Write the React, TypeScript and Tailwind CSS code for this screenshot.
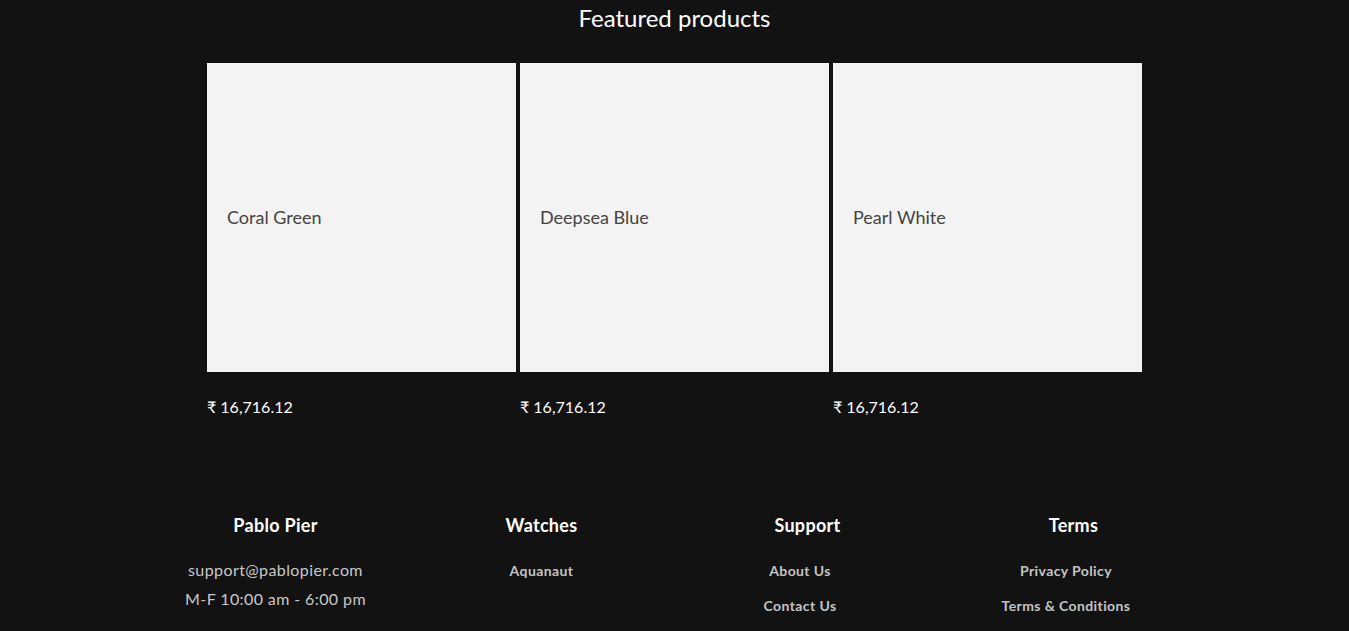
import React from "react";

const products = [
  { id: "coral", name: "Coral Green", price: "₹ 16,716.12" },
  { id: "deepsea", name: "Deepsea Blue", price: "₹ 16,716.12" },
  { id: "pearl", name: "Pearl White", price: "₹ 16,716.12" },
];

const footer = [
  { title: "Pablo Pier", items: ["support@pablopier.com", "M-F 10:00 am - 6:00 pm"], plain: true },
  { title: "Watches", items: ["Aquanaut"] },
  { title: "Support", items: ["About Us", "Contact Us"], shift: true },
  { title: "Terms", items: ["Privacy Policy", "Terms & Conditions"], shift: true },
];

export default function App() {
  return (
    <div className="min-h-[631px] bg-[#121212] text-white font-['Lato','Noto_Sans',sans-serif]">
      <h2 className="text-center text-[24px] leading-[36px]">Featured products</h2>

      {/* Product grid */}
      <div className="mx-auto mt-[27px] grid w-[935px] grid-cols-3 gap-[4px]">
        {products.map((p) => (
          <div key={p.id}>
            <div className="flex h-[309px] items-center bg-[#f3f3f3] px-[20px]">
              <span className="text-[18px] text-[#444444]">{p.name}</span>
            </div>
            <div className="mt-[25px] text-[16px] leading-[20px]">{p.price}</div>
          </div>
        ))}
      </div>

      {/* Footer */}
      <div className="mx-auto mt-[96px] grid w-[1064px] grid-cols-4">
        {footer.map((col) => (
          <div key={col.title} className="flex flex-col items-center">
            <h3 className="text-[18px] font-bold leading-[24px] tracking-[0.3px]">{col.title}</h3>
            <ul
              className={`flex flex-col items-center ${col.plain ? "mt-[22px] gap-[7px]" : "mt-[24px] gap-[15px]"} ${col.shift ? "mr-[15px]" : ""}`}
            >
              {col.items.map((item) =>
                col.plain ? (
                  <li key={item} className="text-[16px] leading-[22px] tracking-[0.4px] text-[#c8c8c8]">
                    {item}
                  </li>
                ) : (
                  <li key={item} className="text-[14px] font-bold leading-[20px] tracking-[0.4px] text-[#c4c4c4]">
                    {item}
                  </li>
                )
              )}
            </ul>
          </div>
        ))}
      </div>
    </div>
  );
}
